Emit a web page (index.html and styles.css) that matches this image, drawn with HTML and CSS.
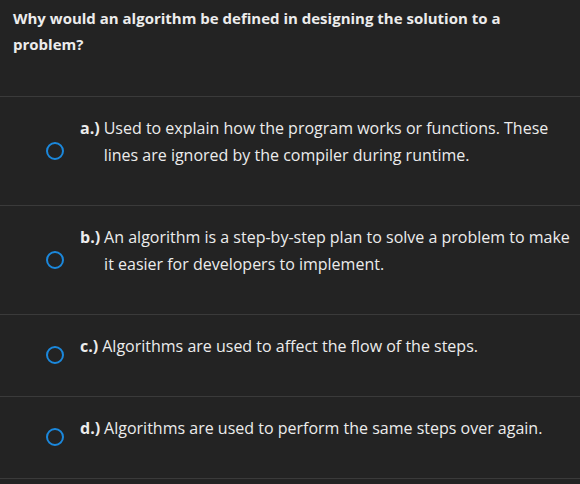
FILE: index.html
```html
<!DOCTYPE html>
<html lang="en">
<head>
  <meta charset="UTF-8" />
  <title>Question</title>
  <link rel="stylesheet" href="styles.css">
</head>
<body>
  <div class="question">
    Why would an algorithm be defined in designing the solution to a problem?
  </div>

  <div class="answers">
    <label class="answer">
      <span class="radio"></span>
      <span class="letter">a.)</span>
      <span class="text">Used to explain how the program works or functions. These lines are ignored by the compiler during runtime.</span>
    </label>
    <label class="answer">
      <span class="radio"></span>
      <span class="letter">b.)</span>
      <span class="text">An algorithm is a step-by-step plan to solve a problem to make it easier for developers to implement.</span>
    </label>
    <label class="answer">
      <span class="radio"></span>
      <span class="letter">c.)</span>
      <span class="text">Algorithms are used to affect the flow of the steps.</span>
    </label>
    <label class="answer">
      <span class="radio"></span>
      <span class="letter">d.)</span>
      <span class="text">Algorithms are used to perform the same steps over again.</span>
    </label>
  </div>
</body>
</html>
```

FILE: styles.css
```css
body {
  margin: 0;
  background: #232323;
  color: #ececec;
  font-family: 'Open Sans', sans-serif;
}

.question {
  padding: 5px 60px 39px 13px;
  font-size: 15px;
  font-weight: bold;
  line-height: 26px;
  border-bottom: 1px solid #3a3a3a;
}

.answer {
  display: flex;
  align-items: center;
  padding: 18px 4px 16px 46px;
  border-bottom: 1px solid #3a3a3a;
  font-size: 16px;
  line-height: 27px;
  cursor: pointer;
}

.radio {
  flex: none;
  width: 14px;
  height: 14px;
  border: 2px solid #1b88dc;
  border-radius: 50%;
  margin: 0 16px 3px 0;
}

.letter {
  flex: none;
  align-self: flex-start;
  font-weight: bold;
  margin-right: 4px;
}

.text {
  margin-bottom: 20px;
}
```
